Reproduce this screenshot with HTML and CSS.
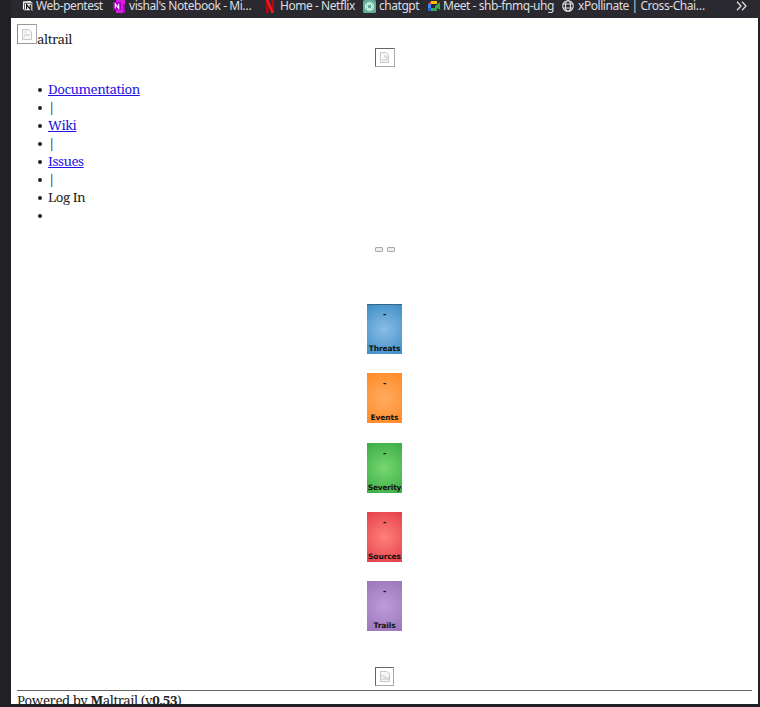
FILE: index.html
```html
<!DOCTYPE html>
<html lang="en">
<head>
<meta charset="utf-8">
<title>Maltrail</title>
<link rel="stylesheet" href="styles.css">
</head>
<body>
<nav class="bookmarks">
  <a class="bm bm-pentest"><svg width="11" height="12" viewBox="0 0 12 12"><path d="M1 1 9 .5 11.5 2.5V11.5H3L1 9Z" fill="#fff"/><path d="M2.5 3H11V11H3Z" fill="#fff" stroke="#111" stroke-width=".8"/><path d="M5 9.5V4.5L9 9.5V4.5" fill="none" stroke="#111" stroke-width="1.3"/></svg><span>Web-pentest</span></a>
  <a class="bm bm-notebook"><svg width="12" height="13" viewBox="0 0 12 13"><path d="M3 0H12V13H3Z" fill="#d51ce5"/><path d="M10 4H12V13H10Z" fill="#9b11ad"/><path d="M0 2H8V10H0Z" fill="#a900bd"/><path d="M2.3 8.3V3.8L5.7 8.3V3.8" fill="none" stroke="#fff" stroke-width="1.1"/></svg><span>vishal's Notebook - Mi…</span></a>
  <a class="bm bm-netflix"><svg width="8" height="13" viewBox="0 0 8 13"><path d="M0 0H2.6V13H0ZM5.4 0H8V13H5.4Z" fill="#b50912"/><path d="M0 0H2.6L8 13H5.4Z" fill="#f01924"/></svg><span>Home - Netflix</span></a>
  <a class="bm bm-chat"><svg width="13" height="13" viewBox="0 0 13 13"><rect width="13" height="13" rx="1.5" fill="#62ad97"/><g fill="none" stroke="#e8fff6" stroke-width=".8"><ellipse cx="6.5" cy="6.5" rx="2.3" ry="4.6"/><ellipse cx="6.5" cy="6.5" rx="2.3" ry="4.6" transform="rotate(60 6.5 6.5)"/><ellipse cx="6.5" cy="6.5" rx="2.3" ry="4.6" transform="rotate(120 6.5 6.5)"/></g></svg><span>chatgpt</span></a>
  <a class="bm bm-meet"><svg width="12" height="10" viewBox="0 0 12 10"><path d="M0 3 3 0V3Z" fill="#ea4335"/><path d="M3 0H9V3H3Z" fill="#fbbc04"/><path d="M0 3H3V7H0Z" fill="#4285f4"/><path d="M0 7H3V10H1Q0 10 0 9Z" fill="#1967d2"/><path d="M3 7H7V5L9 3.5 12 1V9L9 7V9Q9 10 8 10H3Z" fill="#34a853"/></svg><span>Meet - shb-fnmq-uhg</span></a>
  <a class="bm bm-globe"><svg width="12" height="12" viewBox="0 0 12 12" fill="none" stroke="#e3e3e5" stroke-width="1.1"><circle cx="6" cy="6" r="5.3"/><ellipse cx="6" cy="6" rx="2.5" ry="5.3"/><path d="M1 4H11M1 8H11"/></svg><span>xPollinate | Cross-Chai…</span></a>
  <svg class="more" width="11" height="10" viewBox="0 0 11 10" fill="none" stroke="#dedee0" stroke-width="1.3"><path d="M1 .8 5 5 1 9.2M6 .8 10 5 6 9.2"/></svg>
</nav>
<main class="page">
  <header class="brand"><span class="broken large"><svg width="10" height="11" viewBox="0 0 10 11"><path d="M.5.5H7L9.5 3V10.5H.5Z"/><path d="M2 8 4 5 6 7 8 5M3 3H5"/></svg></span><span class="name">altrail</span></header>
  <div class="picture top"><span class="broken"><svg width="9" height="11" viewBox="0 0 9 11"><path d="M.5.5H6L8.5 3V10.5H.5Z"/><path d="M2 8H7V5H5V3"/></svg></span></div>
  <ul class="menu">
    <li><a class="link">Documentation</a></li>
    <li>|</li>
    <li><a class="link">Wiki</a></li>
    <li>|</li>
    <li><a class="link">Issues</a></li>
    <li>|</li>
    <li>Log In</li>
    <li></li>
  </ul>
  <div class="buttons"><span class="pill"></span><span class="pill"></span></div>
  <section class="tiles">
    <div class="tile threats"><span class="value">-</span><span class="label">Threats</span></div>
    <div class="tile events"><span class="value">-</span><span class="label">Events</span></div>
    <div class="tile severity"><span class="value">-</span><span class="label">Severity</span></div>
    <div class="tile sources"><span class="value">-</span><span class="label">Sources</span></div>
    <div class="tile trails"><span class="value">-</span><span class="label">Trails</span></div>
  </section>
  <div class="picture bottom"><span class="broken"><svg width="10" height="11" viewBox="0 0 10 11"><path d="M.5.5H7L9.5 3V10.5H.5Z"/><path d="M1 5H4L5 7H9M1 8H9"/></svg></span></div>
  <footer class="foot">Powered by <b>M</b>altrail (v<b>0.53</b>)</footer>
</main>
</body>
</html>
```
FILE: styles.css
```css
* { box-sizing: border-box; }
body {
  margin: 0;
  width: 760px;
  height: 707px;
  overflow: hidden;
  background: #202124;
  color: #222;
  font: 13.3px/18px "Noto Serif", "DejaVu Serif Condensed", "DejaVu Serif", serif;
  letter-spacing: -.47px;
}
svg { display: block; flex: none; }
.bookmarks {
  display: flex;
  height: 18px;
  margin-left: 11px;
  padding-left: 11px;
  background: #29292f;
  color: #dedee0;
  font: 12px/12px "Noto Sans", sans-serif;
  letter-spacing: -.45px;
}
.bm { display: flex; align-items: center; height: 12px; flex: none; white-space: nowrap; }
.bm span { margin-left: 3px; }
.bm-pentest { width: 91px; }
.bm-notebook { width: 153px; }
.bm-notebook span { margin-left: 4px; }
.bm-netflix { width: 97px; }
.bm-netflix span { margin-left: 6px; }
.bm-chat { width: 65px; }
.bm-meet { width: 134px; }
.bm-globe { width: 174px; }
.bm-globe span { margin-left: 4px; }
.more { margin-top: 1px; }
.page {
  display: flex;
  flex-direction: column;
  width: 747px;
  height: 686px;
  margin-left: 11px;
  padding: 6px 6px 0;
  overflow: hidden;
  background: #fff;
}
.brand { display: flex; height: 24px; flex: none; }
.name { margin-top: 6px; }
.broken {
  display: grid;
  place-items: center;
  width: 19px;
  height: 19px;
  border: 1px solid;
  border-color: #666 #aaa #aaa #666;
}
.broken svg { fill: #f7f7f7; stroke: #bbb; stroke-width: .8; }
.large { width: 20px; height: 20px; border-color: #999 #aaa #999 #888; }
.picture { display: flex; justify-content: center; flex: none; }
.top { height: 32px; }
.top .broken { width: 20px; }
.menu { height: 144px; flex: none; margin: 0; padding: 0 0 0 31px; list-style: none; }
.menu li { display: flex; align-items: center; height: 18px; }
.menu li::before {
  content: "";
  width: 4px;
  height: 4px;
  margin: 2px 6px 0 -10px;
  border-radius: 50%;
  background: #222;
}
.link { color: #2412e4; text-decoration: underline; }
.buttons { display: flex; justify-content: center; gap: 4px; height: 80px; padding-top: 23px; flex: none; }
.pill { width: 8px; height: 5px; border: 1px solid #aaa; border-radius: 1px; background: #eee; }
.tiles { display: flex; flex-direction: column; align-items: center; gap: 19.35px; height: 363px; flex: none; }
.tile {
  display: flex;
  flex-direction: column;
  align-items: center;
  justify-content: space-between;
  width: 35px;
  height: 50px;
  padding-top: 5px;
  flex: none;
  color: #111;
  font: bold 8px/11px "DejaVu Sans", sans-serif;
}
.label { font-size: 7.5px; white-space: nowrap; letter-spacing: -.1px; }
.threats { padding-top: 4px; background: radial-gradient(circle, #8abde6, #3d8dc5); border-top: 1px solid #35678d; }
.events { background: radial-gradient(circle, #ffab60, #ff8a26); }
.severity { background: radial-gradient(circle, #77d770, #3aac45); }
.severity .label { letter-spacing: -.2px; }
.sources { background: radial-gradient(circle, #ff817a, #e43f4b); }
.trails { background: radial-gradient(circle, #bd9cda, #9b76b9); }
.bottom { height: 23px; }
.foot { height: 16px; flex: none; border-top: 1px solid #666; letter-spacing: -.43px; }
```
